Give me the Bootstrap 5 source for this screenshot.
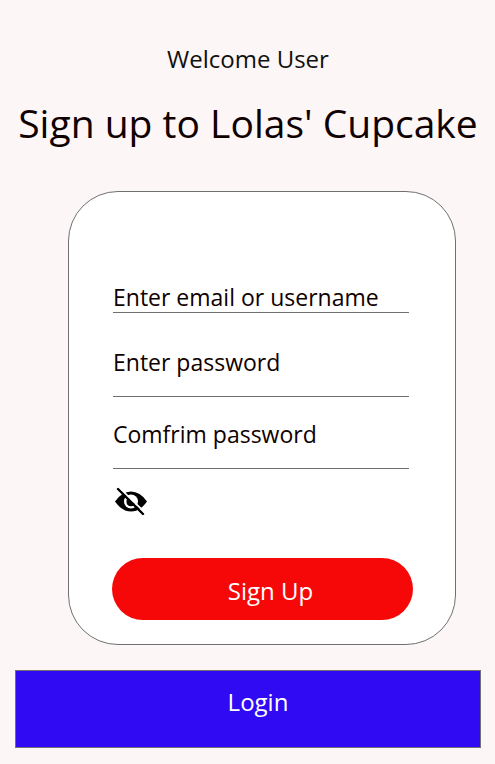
<!DOCTYPE html>
<html lang="en">
<head>
<meta charset="utf-8">
<meta name="viewport" content="width=device-width, initial-scale=1">
<title>Sign up to Lolas' Cupcake</title>
<link href="https://cdn.jsdelivr.net/npm/bootstrap@5.3.0/dist/css/bootstrap.min.css" rel="stylesheet">
<style>
body { background: #fcf6f6; color: #0f0000; font-family: "Segoe UI", "Open Sans", "Noto Sans", sans-serif; font-size: 24px; line-height: 32px; }
.page { padding: 43px 14px 16px 15px; }
.welcome { color: #101010; }
.title { font-size: 39px; line-height: 56px; margin-top: 20px; margin-bottom: 40px; }
.panel { margin-left: 53px; margin-right: 25px; padding: 89px 42px 24px 43px; background: #fff; border: 1px solid #707070; border-radius: 50px; }
.line-field { height: 32px; padding: 0; color: #0f0000; font-size: 23px; line-height: 31px; background: transparent; border: 0; border-bottom: 1px solid #707070; border-radius: 0; }
.line-field::placeholder { color: #0f0000; opacity: 1; }
.line-field.roomy { height: 50px; padding-bottom: 20px; }
.fields { padding-left: 1px; padding-right: 4px; }
.field-gap { margin-top: 34px; }
.field-gap-sm { margin-top: 22px; }
.eye { margin: 17px 0 40px 2px; line-height: 0; }
.signup { height: 62px; padding: 4px 0 0 16px; color: #fff; background: #f70808; font-size: 24px; }
.login { height: 78px; margin-top: 25px; padding: 0 0 14px 20px; color: #fff; background: #300af3; border: 1px solid #707070; }
.signup:hover, .signup:active { color: #fff !important; background: #d90707 !important; }
.login:hover { color: #fff; background: #2708c8; }
</style>
</head>
<body>
<main class="page">
  <header class="text-center">
    <p class="welcome mb-0">Welcome User</p>
    <h1 class="title fw-normal text-nowrap">Sign up to Lolas' Cupcake</h1>
  </header>
  <form class="panel">
    <div class="fields">
      <input class="form-control line-field" id="user" type="text" aria-label="Enter email or username" placeholder="Enter email or username">
      <input class="form-control line-field roomy field-gap" id="password" type="password" aria-label="Enter password" placeholder="Enter password">
      <input class="form-control line-field roomy field-gap-sm" id="confirm" type="password" aria-label="Comfrim password" placeholder="Comfrim password">
    </div>
    <button class="eye btn p-0 border-0 d-block" type="button" aria-label="Show password">
      <svg width="34" height="32" viewBox="0 0 34 32" aria-hidden="true">
        <path d="M1 15.5Q8 5.5 17 5.5T33 15.5Q26 25.5 17 25.5T1 15.5Z" fill="#000"/>
        <circle cx="17" cy="15.5" r="7" fill="#fff"/>
        <path d="M15.5 11.6A4.5 4.5 0 1 0 21.4 16.6H18.5L16.5 14.5Z" fill="#000"/>
        <path d="M6 2.5L32.5 28" stroke="#fff" stroke-width="1.8"/>
        <path d="M4 3L29 28" stroke="#000" stroke-width="2.4" stroke-linecap="round"/>
      </svg>
    </button>
    <button class="signup btn w-100 rounded-pill border-0" type="submit">Sign Up</button>
  </form>
  <a class="login d-flex align-items-center justify-content-center text-decoration-none" href="#login">Login</a>
</main>
<script src="https://cdn.jsdelivr.net/npm/bootstrap@5.3.0/dist/js/bootstrap.bundle.min.js"></script>
</body>
</html>
